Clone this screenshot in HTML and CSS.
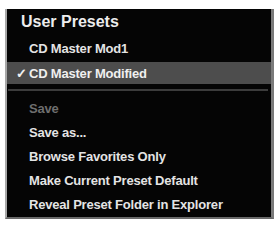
FILE: index.html
```html
<!DOCTYPE html>
<html>
<head>
<meta charset="utf-8">
<link rel="stylesheet" href="styles.css">
</head>
<body>
<div class="menu">
  <div class="header">User Presets</div>
  <div class="item">CD Master Mod1</div>
  <div class="item selected"><span class="check">✓</span>CD Master Modified</div>
  <div class="sep"></div>
  <div class="item row disabled">Save</div>
  <div class="item row">Save as...</div>
  <div class="item row">Browse Favorites Only</div>
  <div class="item row">Make Current Preset Default</div>
  <div class="item row">Reveal Preset Folder in Explorer</div>
</div>
</body>
</html>
```
FILE: styles.css
```css
html, body {
  margin: 0;
  padding: 0;
  background: #ffffff;
}
body {
  width: 279px;
  height: 225px;
  overflow: hidden;
  font-family: "Liberation Sans", Arial, sans-serif;
}
.menu {
  margin: 9px 0 0 5px;
  width: 264px;
  background: #050505;
  border-left: 2px solid #a8a8a8;
  border-right: 3px solid #7a7a7a;
  border-bottom: 2px solid #6a6a6a;
  padding-bottom: 1px;
  display: flex;
  flex-direction: column;
}
.header {
  height: 26px;
  display: flex;
  align-items: center;
  padding-left: 14px;
  font-size: 16px;
  font-weight: bold;
  color: #ededed;
}
.item {
  height: 27px;
  display: flex;
  align-items: center;
  padding-left: 22px;
  font-size: 13px;
  font-weight: bold;
  letter-spacing: -0.2px;
  color: #e4e4e4;
}
.item.selected {
  height: 22px;
  padding-left: 9px;
  background: #4d4d4d;
  color: #f0f0f0;
}
.check {
  display: inline-block;
  width: 13px;
  font-size: 13px;
  font-weight: bold;
}
.sep {
  height: 12px;
  display: flex;
  align-items: center;
  padding: 0 3px 0 1px;
}
.sep::before {
  content: "";
  flex: 1;
  height: 2px;
  background: #3c3c3c;
}
.item.row {
  height: 24px;
}
.item.disabled {
  color: #6e6e6e;
}
```
